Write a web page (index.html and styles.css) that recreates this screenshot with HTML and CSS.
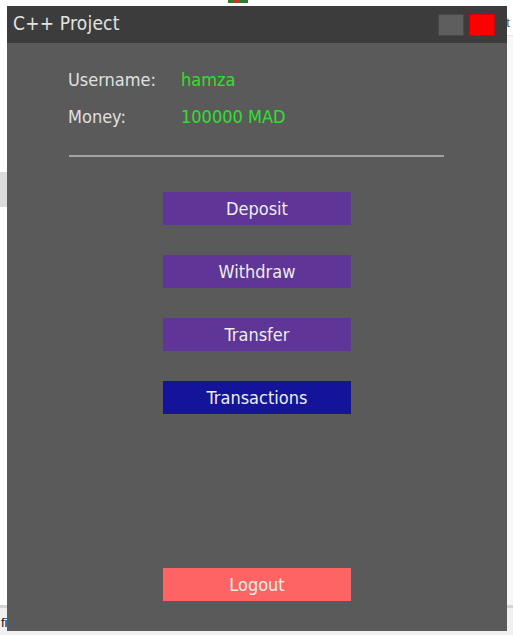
FILE: index.html
```html
<!DOCTYPE html>
<html>
<head>
<meta charset="utf-8">
<link rel="stylesheet" href="styles.css">
</head>
<body>
<div class="desktop">
  <div class="bg-top"><span class="bg-icon"></span></div>
  <div class="bg-left-box"></div>
  <div class="bg-right"></div>
  <span class="bg-right-text">pt</span>
  <div class="bg-bottom"><span class="bg-bottom-text">file, 25,075, 25 bytes</span></div>

  <div class="window">
    <div class="titlebar">
      <span class="title">C++ Project</span>
      <div class="controls">
        <span class="ctl ctl-min"></span>
        <span class="ctl ctl-close"></span>
      </div>
    </div>
    <div class="content">
      <div class="info">
        <div class="row"><span class="label">Username:</span><span class="value">hamza</span></div>
        <div class="row"><span class="label">Money:</span><span class="value">100000 MAD</span></div>
      </div>
      <div class="divider"></div>
      <div class="actions">
        <button class="btn btn-purple">Deposit</button>
        <button class="btn btn-purple">Withdraw</button>
        <button class="btn btn-purple">Transfer</button>
        <button class="btn btn-blue">Transactions</button>
      </div>
      <button class="btn btn-logout">Logout</button>
    </div>
  </div>
</div>
</body>
</html>
```
FILE: styles.css
```css
html, body {
  margin: 0;
  padding: 0;
}
body {
  width: 513px;
  height: 635px;
  overflow: hidden;
  background: #ffffff;
  font-family: "DejaVu Sans Condensed", "DejaVu Sans", sans-serif;
}
.desktop {
  position: relative;
  width: 513px;
  height: 635px;
}
.bg-top {
  position: absolute;
  left: 0;
  top: 0;
  width: 513px;
  height: 6px;
  background: #ffffff;
}
.bg-icon {
  position: absolute;
  left: 228px;
  top: 0;
  width: 20px;
  height: 3px;
  background: linear-gradient(90deg, #2e7d32 0 30%, #c0392b 30% 60%, #2e7d32 60%);
}
.bg-left-box {
  position: absolute;
  left: 0;
  top: 172px;
  width: 7px;
  height: 35px;
  background: #dcdcdc;
}
.bg-right {
  position: absolute;
  left: 507px;
  top: 35px;
  width: 6px;
  height: 600px;
  background: #f7f7f7;
  border-top: 1px solid #e6e6e6;
}
.bg-right-text {
  position: absolute;
  left: 499px;
  top: 15px;
  font-family: "Liberation Sans", sans-serif;
  font-size: 13px;
  color: #555;
}
.bg-bottom {
  position: absolute;
  left: 0;
  top: 605px;
  width: 513px;
  height: 30px;
  background: #f0f0f0;
  border-top: 3px solid #d4d4d4;
  overflow: hidden;
}
.bg-bottom-text {
  position: absolute;
  left: 1px;
  top: 7px;
  font-family: "Liberation Sans", sans-serif;
  font-size: 13px;
  color: #111;
}
.window {
  position: absolute;
  left: 7px;
  top: 6px;
  width: 500px;
  height: 625px;
  background: #5a5a5a;
  display: flex;
  flex-direction: column;
}
.titlebar {
  height: 37px;
  background: #3c3c3c;
  display: flex;
  align-items: center;
  justify-content: space-between;
  padding: 0 12px 0 6px;
  flex-shrink: 0;
}
.title {
  color: #e2e2e2;
  font-size: 19px;
  letter-spacing: 0.2px;
  margin-top: -4px;
}
.controls {
  display: flex;
  gap: 5px;
}
.ctl {
  width: 24px;
  height: 20px;
  display: block;
}
.ctl-min {
  background: #5e5e5e;
  border: 1px solid #484848;
}
.ctl-close {
  background: #ff0000;
  border: 1px solid #d00000;
}
.content {
  flex: 1;
  display: flex;
  flex-direction: column;
  padding: 17px 0 30px;
}
.info {
  padding-left: 61px;
}
.row {
  display: flex;
  height: 38px;
  align-items: center;
  font-size: 18px;
}
.row + .row {
  margin-top: -1px;
}
.label {
  width: 113px;
  color: #e0e0e0;
}
.value {
  color: #2ee02e;
}
.divider {
  margin: 20px 0 0 62px;
  width: 375px;
  height: 2px;
  background: #a2a2a2;
}
.actions {
  margin-top: 35px;
  display: flex;
  flex-direction: column;
  align-items: center;
  gap: 30px;
}
.btn {
  display: block;
  width: 188px;
  height: 33px;
  border: none;
  padding: 0;
  margin: 0;
  color: #ececec;
  font-family: "DejaVu Sans Condensed", "DejaVu Sans", sans-serif;
  font-size: 18px;
  text-align: center;
}
.btn-purple {
  background: #5f3597;
}
.btn-blue {
  background: #14149a;
}
.btn-logout {
  margin-top: auto;
  margin-left: 156px;
  background: #ff6464;
}
```
